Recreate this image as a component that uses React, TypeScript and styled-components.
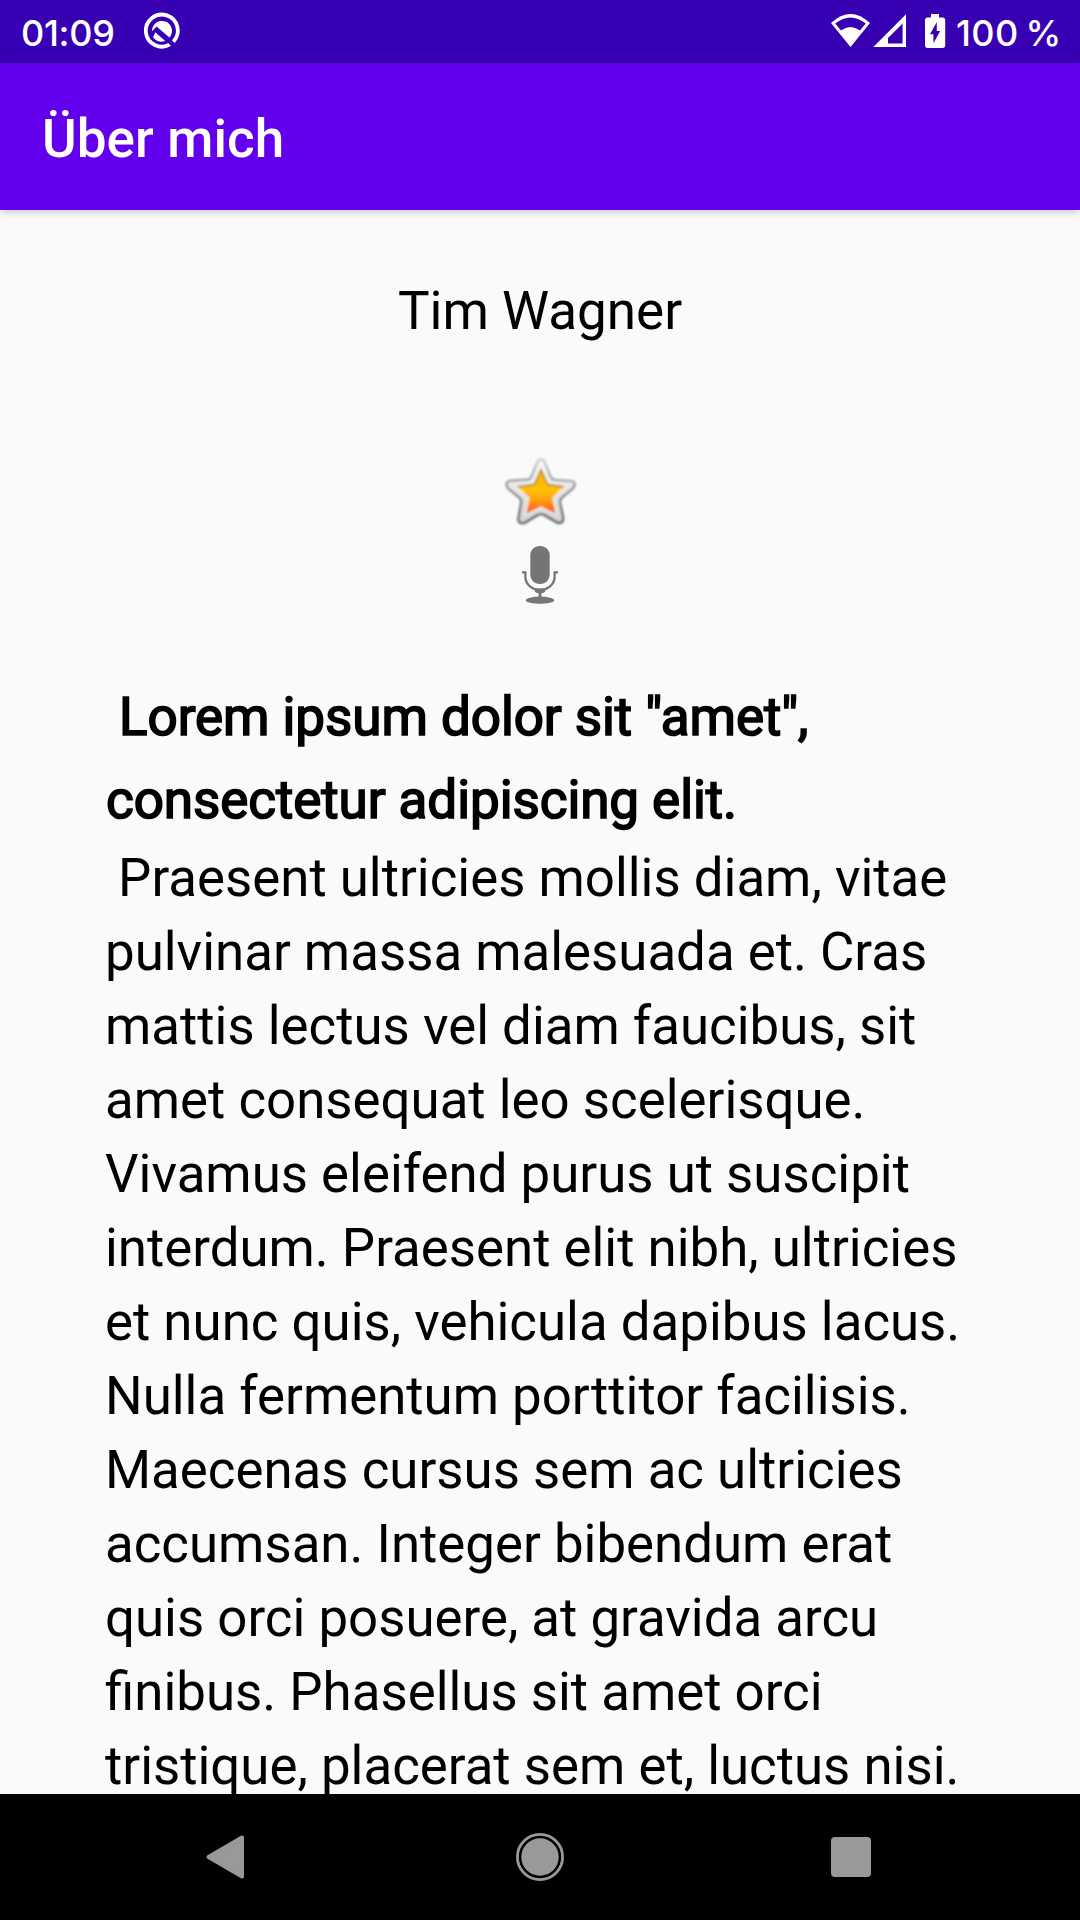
import React from "react";
import styled, { createGlobalStyle } from "styled-components";

const GlobalStyle = createGlobalStyle`
  html, body { margin: 0; padding: 0; background: #fafafa; }
  * { box-sizing: border-box; }
`;

const Screen = styled.div`
  display: flex;
  flex-direction: column;
  width: 1080px;
  height: 1920px;
  overflow: hidden;
  background: #fafafa;
  color: #000;
  font-family: Roboto, "Liberation Sans", sans-serif;
`;

const StatusBar = styled.div`
  display: flex;
  align-items: center;
  justify-content: space-between;
  flex: none;
  height: 63px;
  padding: 0 22px 0 21px;
  background: #3700b3;
  color: #fff;
`;

const StatusGroup = styled.div`
  display: flex;
  align-items: center;
  height: 63px;
`;

const StatusText = styled.span<{ $width: number; $spacing: number }>`
  width: ${(p) => p.$width}px;
  padding-top: 3px;
  font-family: Inter, Roboto, sans-serif;
  font-size: 36px;
  font-weight: 500;
  line-height: 42px;
  letter-spacing: ${(p) => p.$spacing}px;
  word-spacing: -3.1px;
  white-space: pre;
`;

const AppBar = styled.header`
  display: flex;
  align-items: center;
  flex: none;
  height: 147px;
  padding-left: 42px;
  background: #6200ee;
  color: #fff;
  z-index: 1;
  box-shadow: 0 2px 8px rgba(0, 0, 0, 0.2);
`;

const Title = styled.h1`
  margin: 0;
  padding-top: 5px;
  font-size: 53px;
  font-weight: 500;
  line-height: 62px;
  letter-spacing: 0.08px;
`;

const Content = styled.main`
  display: flex;
  flex-direction: column;
  align-items: center;
  flex: 1;
  min-height: 0;
  overflow: hidden;
`;

const Name = styled.div`
  flex: none;
  margin-top: 70px;
  font-size: 53px;
  line-height: 62px;
`;

const Icons = styled.div`
  display: flex;
  flex-direction: column;
  align-items: center;
  flex: none;
  margin-top: 109px;
`;

const Article = styled.article`
  flex: none;
  width: 870px;
  margin-top: 57px;
  font-size: 52.8px;
  white-space: pre;
`;

const Heading = styled.h2`
  margin: 0;
  padding-left: 1px;
  font-size: 53px;
  font-weight: 400;
  line-height: 83px;
  letter-spacing: -0.08px;
  -webkit-text-stroke: 1.7px #000;
`;

const Paragraph = styled.p`
  margin: -1px 0 0;
  line-height: 74px;
`;

const NavBar = styled.nav`
  display: flex;
  align-items: center;
  justify-content: space-between;
  flex: none;
  height: 126px;
  padding: 0 207px 0 205px;
  background: #000;
`;

const Icon = styled.svg`
  display: block;
  flex: none;
`;

const LINES = [
  " Praesent ultricies mollis diam, vitae",
  "pulvinar massa malesuada et. Cras",
  "mattis lectus vel diam faucibus, sit",
  "amet consequat leo scelerisque.",
  "Vivamus eleifend purus ut suscipit",
  "interdum. Praesent elit nibh, ultricies",
  "et nunc quis, vehicula dapibus lacus.",
  "Nulla fermentum porttitor facilisis.",
  "Maecenas cursus sem ac ultricies",
  "accumsan. Integer bibendum erat",
  "quis orci posuere, at gravida arcu",
  "finibus. Phasellus sit amet orci",
  "tristique, placerat sem et, luctus nisi.",
];

const DebugIcon = () => (
  <Icon width="42" height="63" viewBox="141 0 42 63">
    <path d="M171.2 44.2 A16 16 0 1 1 174.4 41.6" fill="none" stroke="#fff" strokeWidth="3.8" />
    <path d="M153 31.2 A10 10 0 1 1 170.4 37.6 L157.6 26.6 Z" fill="#fff" />
    <path d="M156.3 32.3 L166.2 41 A10.2 10.2 0 0 1 154 37.2 Z" fill="#fff" />
    <path d="M163 35 L176 48" stroke="#3700b3" strokeWidth="2.6" />
  </Icon>
);

const SignalIcons = () => (
  <Icon width="120" height="63" viewBox="829 0 120 63">
    <path d="M831 23.1 Q850.5 4.9 870 23.1 L850.5 47 Z" fill="#fff" />
    <path d="M835.2 23.6 Q850.5 11.2 865.8 23.6 L860 30.6 Q850.5 23.2 841 30.6 Z" fill="#3700b3" />
    <path d="M873.3 47 L906 14.3 V47 Z M888 43.6 H902.6 V23.4 L888 38 Z" fill="#fff" fillRule="evenodd" />
    <path d="M931 14 H939 V17.5 H942.5 Q945.2 17.5 945.2 20.2 V45.3 Q945.2 48 942.5 48 H927.7 Q925 48 925 45.3 V20.2 Q925 17.5 927.7 17.5 H931 Z" fill="#fff" />
    <path d="M936.8 22 V31 H940.2 L933.4 43.3 V34.2 H930 Z" fill="#3700b3" />
  </Icon>
);

const STAR =
  "M61 18.8 Q63.5 19 65 23 L70.5 36.5 Q72 39.8 75.5 40 L91 41 Q95.3 41.5 94.6 45.4 Q94 47.4 91.5 49.5 L81.8 57.5 Q79.5 59.5 80 62.5 L83 77 Q83.7 81.5 81 82.6 Q79 83.5 76 81.7 L64.5 75 Q61 73 57.5 75 L45 82.4 Q41.5 84 39.3 82 Q38 80.5 38.8 76.5 L41.2 62.5 Q41.6 59.5 39.4 57.5 L29 49 Q25.8 46 26.7 43.2 Q27.5 41 32 40.7 L47 39.7 Q50.2 39.5 51.5 36.5 L57 23 Q58.5 19 61 18.8 Z";

const StarIcon = () => (
  <Icon width="84" height="84" viewBox="18 11 84 84">
    <defs>
      <linearGradient id="star-rim" x1="0" y1="0" x2="0" y2="1">
        <stop offset="0" stopColor="#cfcfcf" />
        <stop offset="0.45" stopColor="#8c8c8c" />
        <stop offset="1" stopColor="#585858" />
      </linearGradient>
      <linearGradient id="star-body" x1="0" y1="0" x2="0" y2="1">
        <stop offset="0" stopColor="#f8f8f8" />
        <stop offset="1" stopColor="#d2d2d2" />
      </linearGradient>
      <linearGradient id="star-gold" x1="0" y1="0" x2="0" y2="1">
        <stop offset="0" stopColor="#f5b400" />
        <stop offset="0.45" stopColor="#ffc107" />
        <stop offset="0.7" stopColor="#ff9d0c" />
        <stop offset="1" stopColor="#ff5420" />
      </linearGradient>
      <filter id="star-shadow" x="-20%" y="-20%" width="140%" height="140%">
        <feGaussianBlur stdDeviation="1" />
      </filter>
      <filter id="star-soft" x="-20%" y="-20%" width="140%" height="140%">
        <feGaussianBlur stdDeviation="0.8" />
      </filter>
    </defs>
    <g filter="url(#star-soft)">
      <path d={STAR} transform="translate(0 1)" fill="#777" opacity="0.5" filter="url(#star-shadow)" />
      <path d={STAR} fill="url(#star-body)" stroke="url(#star-rim)" strokeWidth="2.2" />
      <path d="M61 29.8 L67.7 44.6 L84 46.7 L72.3 58 L75.7 73.8 L61 66.6 L46.3 73.8 L49.5 58 L37.5 46.7 L54.3 44.6 Z" fill="url(#star-gold)" stroke="#fff" strokeOpacity="0.6" strokeWidth="2.4" paintOrder="stroke" />
      <path d="M37.5 46.7 L54.3 44.6 L61 29.8 L67.7 44.6 L84 46.7" fill="none" stroke="#a87c10" strokeWidth="1.5" />
    </g>
  </Icon>
);

const MicIcon = () => (
  <Icon width="84" height="84" viewBox="498 535 84 84">
    <rect x="530.3" y="546" width="19.4" height="38" rx="9" fill="#757575" />
    <path d="M522 572.3 H525.4 V577 C525.4 584 532 590 540 590 C548 590 554.6 584 554.6 577 V572.3 H558" fill="none" stroke="#757575" strokeWidth="2.3" />
    <path d="M535 588.5 H545 V592 Q543.5 593 541.5 593.3 V598 H538.5 V593.3 Q536.5 593 535 592 Z" fill="#757575" />
    <ellipse cx="540" cy="600.2" rx="14.2" ry="3.6" fill="#757575" />
  </Icon>
);

export default function App() {
  return (
    <Screen>
      <GlobalStyle />
      <StatusBar>
        <StatusGroup>
          <StatusText $width={119} $spacing={-0.3}>01:09</StatusText>
          <DebugIcon />
        </StatusGroup>
        <StatusGroup>
          <SignalIcons />
          <StatusText $width={109} $spacing={0.4}> 100 %</StatusText>
        </StatusGroup>
      </StatusBar>
      <AppBar>
        <Title>Über mich</Title>
      </AppBar>
      <Content>
        <Name>Tim Wagner</Name>
        <Icons>
          <StarIcon />
          <MicIcon />
        </Icons>
        <Article>
          <Heading>{' Lorem ipsum dolor sit "amet",\nconsectetur adipiscing elit.'}</Heading>
          <Paragraph>{LINES.join("\n")}</Paragraph>
        </Article>
      </Content>
      <NavBar>
        <Icon width="46" height="48" viewBox="205 0 46 48">
          <path d="M208.5 24 L242 4.5 V43.5 Z" fill="#999" stroke="#999" strokeWidth="4" strokeLinejoin="round" />
        </Icon>
        <Icon width="48" height="48" viewBox="0 0 48 48">
          <circle cx="24" cy="24" r="22.6" fill="none" stroke="#999" strokeWidth="2.8" />
          <circle cx="24" cy="24" r="18.7" fill="#999" />
        </Icon>
        <Icon width="44" height="44" viewBox="0 0 44 44">
          <rect x="2" y="2" width="40" height="40" rx="4" fill="#999" />
        </Icon>
      </NavBar>
    </Screen>
  );
}
